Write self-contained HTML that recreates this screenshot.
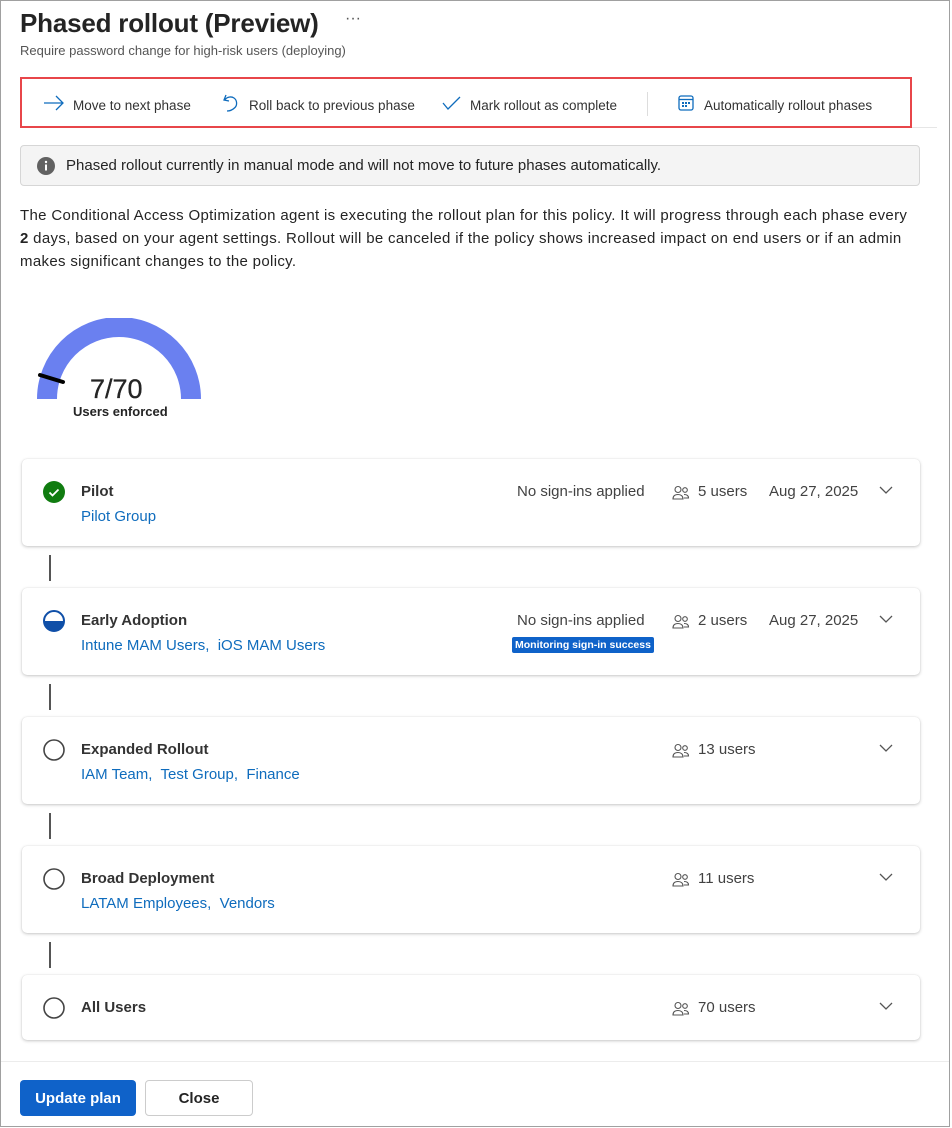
<!DOCTYPE html>
<html><head><meta charset="utf-8"><style>
*{box-sizing:border-box;margin:0;padding:0}
body{width:952px;height:1128px;background:#fff;font-family:"Liberation Sans",sans-serif;color:#242424;position:relative;overflow:hidden}
.frame{position:absolute;left:0;top:0;width:950px;height:1127px;border:1.5px solid #a0a0a0}
.abs{position:absolute}
h1{position:absolute;left:20px;top:8px;font-size:26px;font-weight:bold;color:#242424;letter-spacing:-0.2px}
.sub{left:20px;top:43px;font-size:13px;color:#555}
.tb{left:20px;top:77px;width:892px;height:51px;border:2px solid #e8464a}
.tbi{position:absolute;top:19px;font-size:13.5px;color:#333;white-space:nowrap}
.info{left:20px;top:145px;width:900px;height:41px;background:#f4f4f4;border:1px solid #d6d6d6;border-radius:4px;font-size:15px;color:#242424}
.para{left:20px;top:204px;width:930px;font-size:15px;line-height:23px;color:#242424;white-space:nowrap;letter-spacing:0.33px}
.card{position:absolute;left:22px;width:898px;background:#fff;border-radius:5px;box-shadow:0 1px 3px rgba(0,0,0,.22),0 0 1px rgba(0,0,0,.12)}
.t{position:absolute;left:59px;top:24px;font-size:15px;font-weight:bold;color:#333}
.l{position:absolute;left:59px;top:49px;font-size:15px;color:#0f6cbd;white-space:nowrap}
.r{position:absolute;top:24px;font-size:15px;color:#424242;white-space:nowrap}
.conn{position:absolute;left:49px;width:2px;height:26px;background:#555}
.chev{position:absolute;left:857px;top:27px}
.ic{position:absolute;left:21px;top:22px}
</style></head><body>
<div class="frame"></div>
<h1>Phased rollout (Preview)</h1>
<div class="abs" style="left:345px;top:10px;font-size:16px;color:#555">···</div>
<div class="abs sub">Require password change for high-risk users (deploying)</div>

<div class="abs tb">
 <svg class="abs" style="left:21px;top:16px" width="22" height="16" viewBox="0 0 22 16"><path d="M1 8H20M13 1l7 7-7 7" fill="none" stroke="#0f6cbd" stroke-width="1.3"/></svg>
 <div class="tbi" style="left:51px">Move to next phase</div>
 <svg class="abs" style="left:200px;top:14px" width="18" height="20" viewBox="0 0 18 20"><path d="M4 2L2 7l5 1M2.5 7C5 4 9 3 12 5c3 2 3.5 7 1 9.5S7 18 5 18" fill="none" stroke="#0f6cbd" stroke-width="1.3"/></svg>
 <div class="tbi" style="left:227px">Roll back to previous phase</div>
 <svg class="abs" style="left:420px;top:17px" width="19" height="14" viewBox="0 0 19 14"><path d="M1 7l5 6L18 1" fill="none" stroke="#0f6cbd" stroke-width="1.3"/></svg>
 <div class="tbi" style="left:448px">Mark rollout as complete</div>
 <div class="abs" style="left:625px;top:13px;width:1px;height:24px;background:#ddd"></div>
 <svg class="abs" style="left:656px;top:16px" width="16" height="16" viewBox="0 0 16 16"><rect x="1" y="1" width="14" height="14" rx="2" fill="none" stroke="#0f6cbd" stroke-width="1.3"/><path d="M1 4.5h14" stroke="#0f6cbd" stroke-width="1.3"/><g fill="#0f6cbd"><rect x="4" y="7" width="2" height="2"/><rect x="7" y="7" width="2" height="2"/><rect x="10" y="7" width="2" height="2"/><rect x="4" y="10" width="2" height="2"/><rect x="7" y="10" width="2" height="2"/></g></svg>
 <div class="tbi" style="left:682px">Automatically rollout phases</div>
</div>
<div class="abs" style="left:912px;top:127px;width:25px;height:1px;background:#e6e6e6"></div>

<div class="abs info">
 <svg class="abs" style="left:16px;top:11px" width="18" height="18" viewBox="0 0 18 18"><circle cx="9" cy="9" r="9" fill="#616161"/><rect x="8" y="7.5" width="2" height="6" fill="#fff"/><circle cx="9" cy="5" r="1.2" fill="#fff"/></svg>
 <div class="abs" style="left:45px;top:11px">Phased rollout currently in manual mode and will not move to future phases automatically.</div>
</div>

<div class="abs para">The Conditional Access Optimization agent is executing the rollout plan for this policy. It will progress through each phase every<br><b>2</b> days, based on your agent settings. Rollout will be canceled if the policy shows increased impact on end users or if an admin<br>makes significant changes to the policy.</div>

<svg class="abs" style="left:36px;top:318px" width="166" height="84" viewBox="0 0 166 84">
 <path d="M11 81A72 72 0 0 1 155 81" fill="none" stroke="#6a80f0" stroke-width="20"/>
 <path d="M4 57L27 64" stroke="#000" stroke-width="4" stroke-linecap="round"/>
</svg>
<div class="abs" style="left:90px;top:374px;font-size:27px;color:#242424;font-weight:500;-webkit-text-stroke:0.3px #242424">7/70</div>
<div class="abs" style="left:73px;top:404px;font-size:13px;font-weight:bold;color:#242424">Users enforced</div>

<div class="card" style="top:459px;height:87px">
 <svg class="ic" width="22" height="22" viewBox="0 0 22 22"><circle cx="11" cy="11" r="11" fill="#107c10"/><path d="M6.5 11.5l3 3 6-6" fill="none" stroke="#fff" stroke-width="1.8"/></svg>
 <div class="t">Pilot</div><div class="l">Pilot Group</div>
 <div class="r" style="left:495px">No sign-ins applied</div>
 <svg class="abs" style="left:650px;top:26px" width="18" height="16" viewBox="0 0 18 16"><g fill="none" stroke="#555" stroke-width="1.1"><circle cx="6" cy="4.5" r="3"/><path d="M1 14c0-3 2-4.5 5-4.5s5 1.5 5 4.5z"/><circle cx="13" cy="5" r="2.3"/><path d="M12 9.5c3 0 4.5 1 4.5 3.5H12"/></g></svg>
 <div class="r" style="left:676px">5 users</div>
 <div class="r" style="left:747px">Aug 27, 2025</div>
 <svg class="chev" width="14" height="9" viewBox="0 0 14 9"><path d="M1 1l6 6 6-6" fill="none" stroke="#555" stroke-width="1.3"/></svg>
</div>
<div class="conn" style="top:555px"></div>

<div class="card" style="top:588px;height:87px">
 <svg class="ic" width="22" height="22" viewBox="0 0 22 22"><circle cx="11" cy="11" r="10" fill="#fff" stroke="#0f4fa8" stroke-width="2"/><path d="M1 11h20a10 10 0 0 1-20 0z" fill="#0f4fa8"/></svg>
 <div class="t">Early Adoption</div><div class="l">Intune MAM Users,&nbsp; iOS MAM Users</div>
 <div class="r" style="left:495px">No sign-ins applied</div>
 <div class="abs" style="left:490px;top:49px;height:16px;padding:0 3px;background:#0f62c9;border-radius:2px;color:#fff;font-size:10.5px;font-weight:bold;line-height:16px">Monitoring sign-in success</div>
 <svg class="abs" style="left:650px;top:26px" width="18" height="16" viewBox="0 0 18 16"><g fill="none" stroke="#555" stroke-width="1.1"><circle cx="6" cy="4.5" r="3"/><path d="M1 14c0-3 2-4.5 5-4.5s5 1.5 5 4.5z"/><circle cx="13" cy="5" r="2.3"/><path d="M12 9.5c3 0 4.5 1 4.5 3.5H12"/></g></svg>
 <div class="r" style="left:676px">2 users</div>
 <div class="r" style="left:747px">Aug 27, 2025</div>
 <svg class="chev" width="14" height="9" viewBox="0 0 14 9"><path d="M1 1l6 6 6-6" fill="none" stroke="#555" stroke-width="1.3"/></svg>
</div>
<div class="conn" style="top:684px"></div>

<div class="card" style="top:717px;height:87px">
 <svg class="ic" width="22" height="22" viewBox="0 0 22 22"><circle cx="11" cy="11" r="10" fill="none" stroke="#444" stroke-width="1.6"/></svg>
 <div class="t">Expanded Rollout</div><div class="l">IAM Team,&nbsp; Test Group,&nbsp; Finance</div>
 <svg class="abs" style="left:650px;top:26px" width="18" height="16" viewBox="0 0 18 16"><g fill="none" stroke="#555" stroke-width="1.1"><circle cx="6" cy="4.5" r="3"/><path d="M1 14c0-3 2-4.5 5-4.5s5 1.5 5 4.5z"/><circle cx="13" cy="5" r="2.3"/><path d="M12 9.5c3 0 4.5 1 4.5 3.5H12"/></g></svg>
 <div class="r" style="left:676px">13 users</div>
 <svg class="chev" width="14" height="9" viewBox="0 0 14 9"><path d="M1 1l6 6 6-6" fill="none" stroke="#555" stroke-width="1.3"/></svg>
</div>
<div class="conn" style="top:813px"></div>

<div class="card" style="top:846px;height:87px">
 <svg class="ic" width="22" height="22" viewBox="0 0 22 22"><circle cx="11" cy="11" r="10" fill="none" stroke="#444" stroke-width="1.6"/></svg>
 <div class="t">Broad Deployment</div><div class="l">LATAM Employees,&nbsp; Vendors</div>
 <svg class="abs" style="left:650px;top:26px" width="18" height="16" viewBox="0 0 18 16"><g fill="none" stroke="#555" stroke-width="1.1"><circle cx="6" cy="4.5" r="3"/><path d="M1 14c0-3 2-4.5 5-4.5s5 1.5 5 4.5z"/><circle cx="13" cy="5" r="2.3"/><path d="M12 9.5c3 0 4.5 1 4.5 3.5H12"/></g></svg>
 <div class="r" style="left:676px">11 users</div>
 <svg class="chev" width="14" height="9" viewBox="0 0 14 9"><path d="M1 1l6 6 6-6" fill="none" stroke="#555" stroke-width="1.3"/></svg>
</div>
<div class="conn" style="top:942px"></div>

<div class="card" style="top:975px;height:65px">
 <svg class="ic" width="22" height="22" viewBox="0 0 22 22"><circle cx="11" cy="11" r="10" fill="none" stroke="#444" stroke-width="1.6"/></svg>
 <div class="t">All Users</div>
 <svg class="abs" style="left:650px;top:26px" width="18" height="16" viewBox="0 0 18 16"><g fill="none" stroke="#555" stroke-width="1.1"><circle cx="6" cy="4.5" r="3"/><path d="M1 14c0-3 2-4.5 5-4.5s5 1.5 5 4.5z"/><circle cx="13" cy="5" r="2.3"/><path d="M12 9.5c3 0 4.5 1 4.5 3.5H12"/></g></svg>
 <div class="r" style="left:676px">70 users</div>
 <svg class="chev" width="14" height="9" viewBox="0 0 14 9"><path d="M1 1l6 6 6-6" fill="none" stroke="#555" stroke-width="1.3"/></svg>
</div>

<div class="abs" style="left:1px;top:1061px;width:948px;height:1px;background:#ececec"></div>
<div class="abs" style="left:20px;top:1080px;width:116px;height:36px;background:#0f62c9;border-radius:4px;color:#fff;font-size:15px;font-weight:bold;text-align:center;line-height:38px">Update plan</div>
<div class="abs" style="left:145px;top:1080px;width:108px;height:36px;border:1px solid #ccc;border-radius:4px;color:#242424;font-size:15px;font-weight:bold;text-align:center;line-height:36px">Close</div>
</body></html>
